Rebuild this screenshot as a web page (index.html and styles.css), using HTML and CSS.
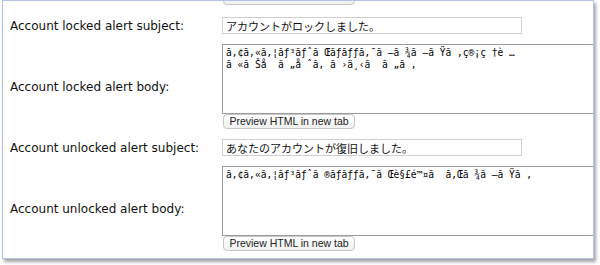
FILE: index.html
```html
<!DOCTYPE html>
<html lang="ja">
<head>
    <meta charset="UTF-8">
    <title>Account alerts</title>
    <link rel="stylesheet" href="styles.css">
</head>
<body>
    <div class="panel">
        <div class="form">
            <div></div>
            <div class="cut"><span class="preview stub"></span></div>

            <label for="locked_subject">Account locked alert subject:</label>
            <div><input type="text" id="locked_subject" class="subject" value="アカウントがロックしました。"></div>

            <label for="locked_body">Account locked alert body:</label>
            <div class="field">
                <textarea id="locked_body" class="body-text">ã‚¢ã‚«ã‚¦ãƒ³ãƒˆã Œãƒãƒƒã‚¯ã —ã ¾ã —ã Ÿã ‚ç®¡ç †è …
ã «ã Šå  ã „å ˆã‚ ã ›ä¸‹ã  ã „ã ‚</textarea>
                <button type="button" class="preview">Preview HTML in new tab</button>
            </div>

            <label for="unlocked_subject">Account unlocked alert subject:</label>
            <div><input type="text" id="unlocked_subject" class="subject" value="あなたのアカウントが復旧しました。"></div>

            <label for="unlocked_body">Account unlocked alert body:</label>
            <div class="field">
                <textarea id="unlocked_body" class="body-text">ã‚¢ã‚«ã‚¦ãƒ³ãƒˆã ®ãƒãƒƒã‚¯ã Œè§£é™¤ã  ã‚Œã ¾ã —ã Ÿã ‚</textarea>
                <button type="button" class="preview">Preview HTML in new tab</button>
            </div>
        </div>
    </div>
</body>
</html>
```

FILE: styles.css
```css
body {
    margin: 0;
    background-color: #fff;
    font-family: 'DejaVu Sans', sans-serif;
    height: 265px;
    overflow: hidden;
}
.panel {
    margin-left: 2px;
    width: 592px;
    box-sizing: border-box;
    border: 1px solid #b4c3e4;
    background-color: #fff;
    box-shadow: 2px 3px 3px rgba(0, 0, 0, 0.35);
    overflow: hidden;
    padding: 0 0 7px 7px;
}
.form {
    display: grid;
    grid-template-columns: 212px 1fr;
    row-gap: 10px;
    align-items: center;
}
.form label {
    font-size: 12px;
    color: #111;
}
.cut {
    height: 4px;
    overflow: hidden;
    margin-bottom: 2px;
}
.cut .stub {
    box-sizing: border-box;
    margin-top: -11px;
}
.subject {
    display: block;
    width: 300px;
    height: 17px;
    box-sizing: border-box;
    margin: 0;
    padding: 0 3px;
    border: 1px solid #cfcfcf;
    font-family: 'Noto Sans CJK JP', sans-serif;
    font-size: 11px;
    color: #111;
}
.field {
    display: flex;
    flex-direction: column;
    align-items: flex-start;
}
.body-text {
    display: block;
    width: 420px;
    height: 70px;
    box-sizing: border-box;
    margin: 0;
    padding: 2px 3px;
    border: 1px solid #9c9c9c;
    resize: none;
    font-family: 'DejaVu Sans Mono', monospace;
    font-size: 9.6px;
    line-height: 12px;
    color: #000;
    white-space: pre;
    overflow: hidden;
}
.preview {
    display: block;
    width: 132px;
    height: 15px;
    margin: 0 0 0 1px;
    padding: 0;
    border: 1px solid #c6c6c6;
    border-radius: 4px;
    background: linear-gradient(#fff, #f1f1f1);
    font-family: 'Liberation Sans', sans-serif;
    font-size: 10.5px;
    line-height: 13px;
    color: #222;
}
```
